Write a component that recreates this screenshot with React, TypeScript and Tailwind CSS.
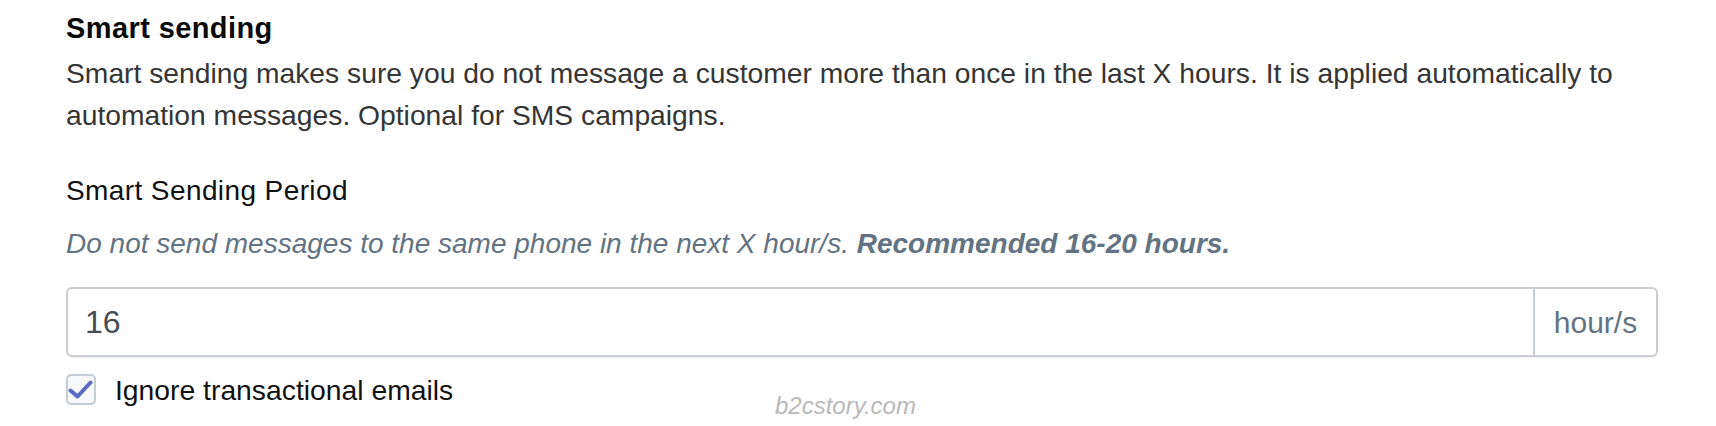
export default function App() {
  return (
    <div
      className="relative w-[1716px] h-[426px] bg-white overflow-hidden"
      style={{ fontFamily: '"Liberation Sans", Arial, Helvetica, sans-serif' }}
    >
      <div className="pl-[66px] pr-[58px] pt-[10px]">
        <h2 className="text-[29px] leading-[36px] font-bold text-[#0a0a0a] tracking-[0.4px]">
          Smart sending
        </h2>
        <p className="mt-[6px] text-[28.25px] leading-[42px] text-[#353535]">
          Smart sending makes sure you do not message a customer more than once in the last X hours. It is applied
          automatically to automation messages. Optional for SMS campaigns.
        </p>
        <div className="mt-[34px] text-[28px] leading-[42px] text-[#111111] tracking-[0.4px]">
          Smart Sending Period
        </div>
        <p className="mt-[11px] text-[28px] leading-[42px] italic text-[#637381]">
          Do not send messages to the same phone in the next X hour/s.{" "}
          <span className="font-bold">Recommended 16-20 hours.</span>
        </p>
        <div className="mt-[22px] flex h-[70px] rounded-[6px] border-2 border-[#c9ccd1] bg-white shadow-[0_1px_0_rgba(22,29,37,0.05)]">
          <div className="flex flex-1 items-center pl-[17px] text-[32px] text-[#474c52]">16</div>
          <div className="flex w-[123px] items-center justify-center border-l-2 border-[#c4cdd5] text-[30px] text-[#637381]">
            hour/s
          </div>
        </div>
        <label className="mt-[17px] flex h-[31px] items-center">
          <span className="flex h-[31px] w-[30px] items-center justify-center rounded-[5px] border-2 border-[#c4cdd5] bg-[#f7f8fa]">
            <svg width="26" height="26" viewBox="0 0 26 26" fill="none">
              <path
                d="M2.5 13.5 L9.5 19.5 L22.5 5.5"
                stroke="#5c6ac4"
                strokeWidth="4"
                strokeLinecap="round"
                strokeLinejoin="round"
              />
            </svg>
          </span>
          <span className="ml-[19px] text-[28.3px] leading-[42px] text-[#111111]">Ignore transactional emails</span>
        </label>
      </div>
      <div className="absolute left-[775px] top-[394px] text-[24px] leading-[24px] italic text-[#b9b9b9]">
        b2cstory.com
      </div>
    </div>
  );
}
